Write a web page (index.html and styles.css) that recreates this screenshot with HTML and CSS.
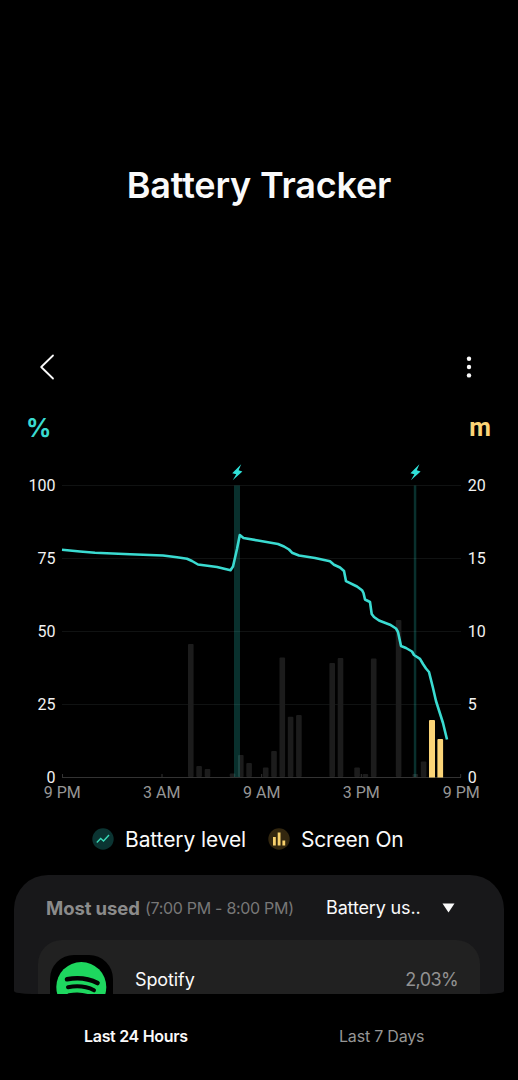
FILE: index.html
```html
<!DOCTYPE html>
<html lang="en">
<head>
<meta charset="utf-8">
<title>Battery Tracker</title>
<link rel="stylesheet" href="styles.css">
</head>
<body>
<div class="screen">
  <header class="hero"><h1>Battery Tracker</h1></header>
  <nav class="toolbar">
    <svg class="back" width="16" height="28" viewBox="0 0 16 28"><path d="M14 2.5 2.2 14 14 25.5"/></svg>
    <svg class="more" width="6" height="24" viewBox="0 0 6 24"><circle cx="3" cy="3.7" r="2.2"/><circle cx="3" cy="12" r="2.2"/><circle cx="3" cy="20.4" r="2.2"/></svg>
  </nav>
  <div class="units"><span class="unit-percent">%</span><span class="unit-minutes">m</span></div>
  <svg class="chart" width="518" height="350" viewBox="0 455 518 350">
    <path class="grid" d="M62 485.5H461M62 558.5H461M62 631.5H461M62 704.5H461"/>
    <g class="bars">
      <rect x="188" y="644" width="5.6" height="133" rx="1"/>
      <rect x="196.3" y="766" width="5.6" height="11" rx="1"/>
      <rect x="204.7" y="769" width="5.6" height="8" rx="1"/>
      <rect x="229.7" y="773.5" width="5.6" height="3.5" rx="1"/>
      <rect x="238" y="755" width="5.6" height="22" rx="1"/>
      <rect x="246.3" y="763" width="5.6" height="14" rx="1"/>
      <rect x="262.9" y="767.5" width="5.6" height="9.5" rx="1"/>
      <rect x="271.2" y="751" width="5.6" height="26" rx="1"/>
      <rect x="279.5" y="657.5" width="5.6" height="119.5" rx="1"/>
      <rect x="287.8" y="716.8" width="5.6" height="60.2" rx="1"/>
      <rect x="296.1" y="715" width="5.6" height="62" rx="1"/>
      <rect x="329.4" y="663" width="5.6" height="114" rx="1"/>
      <rect x="337.7" y="658" width="5.6" height="119" rx="1"/>
      <rect x="354.3" y="767.5" width="5.6" height="9.5" rx="1"/>
      <rect x="362.6" y="774" width="5.6" height="3" rx="1"/>
      <rect x="370.9" y="658.5" width="5.6" height="118.5" rx="1"/>
      <rect x="395.8" y="620" width="5.6" height="157" rx="1"/>
      <rect x="412.5" y="774" width="5.6" height="3" rx="1"/>
      <rect x="420.8" y="761.5" width="5.6" height="15.5" rx="1"/>
    </g>
    <path class="charge" d="M234 485.5H240V777H234ZM413.8 485.5H416.3V777H413.8Z"/>
    <path class="axis" d="M62 777.5H461M62.5 774V777M162 774V777M261.7 774V777M361.3 774V777M460.7 774V777"/>
    <path class="bars-on" d="M429 777.5V721q0-1 1-1h4q1 0 1 1v56.5ZM437.4 777.5v-37.5q0-1 1-1h3.7q1 0 1 1v37.5Z"/>
    <path class="level" d="M62 549.7 80 551.5 95 552.7 130 554.2 163 555.5 177 557.2 187 558.8 192 561 198 564.5 217 567 230.5 570.3 233 566.5 237 549 239.8 535 243.5 538 258 540.5 278 544 284 546.5 289 549.5 292 552.7 299 555.5 315 558 330 561.3 334 564.7 340 567.5 344 571 346 581.2 357 586.5 362 590.2 363.5 593 365 599.5 370 602 371.7 614 374 617 379 620.5 390 624.7 396 628.5 398 632 401 646 406 648 412 651.5 414 655 420 658.8 423 664 426 668.5 429 672 433 688 436 701 443 723 447 739.5"/>
    <path class="bolt" d="M241.2 464.3 232.2 473.2 236.2 474.3 232.7 480.2 242.4 471.4 238.6 470.2Z"/>
    <path class="bolt" d="M419.4 464.3 410.4 473.2 414.4 474.3 410.9 480.2 420.6 471.4 416.8 470.2Z"/>
    <g class="tick tick-left"><text x="55.5" y="490.8">100</text><text x="55.5" y="563.8">75</text><text x="55.5" y="636.8">50</text><text x="55.5" y="709.8">25</text><text x="55.5" y="782.8">0</text></g>
    <g class="tick"><text x="467.7" y="490.8">20</text><text x="467.7" y="563.8">15</text><text x="467.7" y="636.8">10</text><text x="467.7" y="709.8">5</text><text x="467.7" y="782.8">0</text></g>
    <g class="tick tick-time"><text x="62.2" y="798.3">9 PM</text><text x="161.8" y="798.3">3 AM</text><text x="261.7" y="798.3">9 AM</text><text x="361.3" y="798.3">3 PM</text><text x="461.2" y="798.3">9 PM</text></g>
  </svg>
  <div class="legend">
    <svg width="22" height="22" viewBox="0 0 22 22"><circle class="disc-level" cx="11" cy="11" r="10.7"/><path class="mark-level" d="M4.8 14.5 8.7 10.5 11.5 13 17 7"/></svg>
    <span class="legend-level">Battery level</span>
    <svg width="22" height="22" viewBox="0 0 22 22"><circle class="disc-screen" cx="11" cy="11" r="10.7"/><path class="mark-screen" d="M5 9H7.8V17.5H5ZM9.7 4.5H12.5V17.5H9.7ZM14.4 12.5H17.2V17.5H14.4Z"/></svg>
    <span class="legend-screen">Screen On</span>
  </div>
  <section class="usage">
    <div class="usage-head">
      <strong>Most used</strong><span class="range">(7:00 PM - 8:00 PM)</span><span class="sort">Battery us..</span>
      <svg class="caret" width="13" height="10" viewBox="0 0 13 10"><path d="M.5.5H12.5L6.5 9.5Z"/></svg>
    </div>
    <div class="app">
      <svg class="app-icon" width="63" height="63" viewBox="0 0 63 63"><rect width="63" height="63" rx="24" fill="#000"/><circle cx="31.3" cy="32" r="25" fill="#1ed75f"/><path class="wave" stroke-width="4.6" d="M17 24.2Q34 21 47.5 28"/><path class="wave" stroke-width="4" d="M18 32.2Q33 29.5 44 35.3"/><path class="wave" stroke-width="3.3" d="M19 39.9Q32 37.5 42 42.5"/></svg>
      <span class="app-name">Spotify</span><span class="app-value">2,03%</span>
    </div>
  </section>
  <footer class="tabs"><span class="tab tab-active">Last 24 Hours</span><span class="tab">Last 7 Days</span></footer>
</div>
</body>
</html>
```
FILE: styles.css
```css
* { box-sizing: border-box; }
body { margin: 0; background: #000; color: #fafafa; font-family: Inter, Roboto, sans-serif; }
.screen { width: 518px; height: 1080px; overflow: hidden; display: flex; flex-direction: column; background: #000; }
.screen > * { flex-shrink: 0; }
svg { display: block; flex-shrink: 0; }
span, strong { white-space: nowrap; }
.hero { height: 345px; padding-top: 163px; }
h1 { margin: 0; text-align: center; font-size: 36px; line-height: 44px; font-weight: 600; letter-spacing: -0.2px; }
.toolbar { height: 50px; padding: 8px 46px 0 39px; display: flex; justify-content: space-between; }
.back { fill: none; stroke: #fafafa; stroke-width: 1.8; stroke-linecap: round; stroke-linejoin: round; }
.more { fill: #fafafa; margin-top: 2px; }
.units { height: 60px; padding: 18px 27px 0 26px; display: flex; justify-content: space-between; font: 700 25px/30px Roboto, sans-serif; }
.unit-percent { color: #3adbd1; font: 700 25px/31px Inter, sans-serif; }
.unit-minutes { color: #fbd477; }
.grid { stroke: #101212; stroke-width: 1; }
.bars { fill: #1c1c1c; }
.charge { fill: #2bd9cc; fill-opacity: .22; }
.axis { stroke: #333; fill: none; }
.bars-on { fill: #fbd477; }
.level { fill: none; stroke: #3adbd1; stroke-width: 2.6; stroke-linejoin: round; }
.bolt { fill: #2fe1d8; }
.tick { font: 16px/1 Roboto, sans-serif; fill: #f2f2f2; }
.tick-left { text-anchor: end; }
.tick-time { text-anchor: middle; fill: #969696; }
.legend { height: 70px; padding: 23px 0 0 92px; display: flex; line-height: 24px; font-size: 21px; letter-spacing: -0.1px; }
.disc-level { fill: #0b3432; }
.mark-level { fill: none; stroke: #3adbb8; stroke-width: 1.4; }
.disc-screen { fill: #33270f; }
.mark-screen { fill: #f8d16c; }
.legend-level { width: 122px; margin: 0 21px 0 11px; }
.legend-screen { margin-left: 11px; letter-spacing: -0.2px; }
.usage { width: 490px; height: 119px; margin-left: 14px; padding: 0 24px; background: #18181a; border-radius: 34px 34px 18px 18px / 34px 34px 3px 3px; overflow: hidden; }
.usage-head { height: 65px; display: flex; align-items: center; padding-left: 8px; }
.usage-head strong { width: 99px; font-size: 18.5px; letter-spacing: -0.1px; color: #8b8b8b; font-weight: 700; }
.range { width: 180px; font-size: 16px; letter-spacing: -0.3px; color: #777; }
.sort { width: 117px; font-size: 18px; padding-left: 1px; letter-spacing: -0.15px; }
.caret { fill: #fafafa; }
.app { height: 78px; padding: 0 22px 0 12px; display: flex; align-items: center; border-radius: 24px; background: #212121; font-size: 18px; }
.app-icon { align-self: flex-start; margin-top: 15px; }
.wave { fill: none; stroke: #030303; stroke-linecap: round; }
.app-name { margin-left: 22px; letter-spacing: -0.1px; }
.app-value { margin-left: auto; color: #929292; letter-spacing: -0.6px; }
.tabs { height: 86px; display: flex; padding: 32px 0 0; font-size: 16px; line-height: 20px; letter-spacing: -0.2px; }
.tab { color: #969696; margin-left: 151px; }
.tab-active { color: #fafafa; font-weight: 600; width: 104px; margin-left: 84px; letter-spacing: -0.3px; }
```
